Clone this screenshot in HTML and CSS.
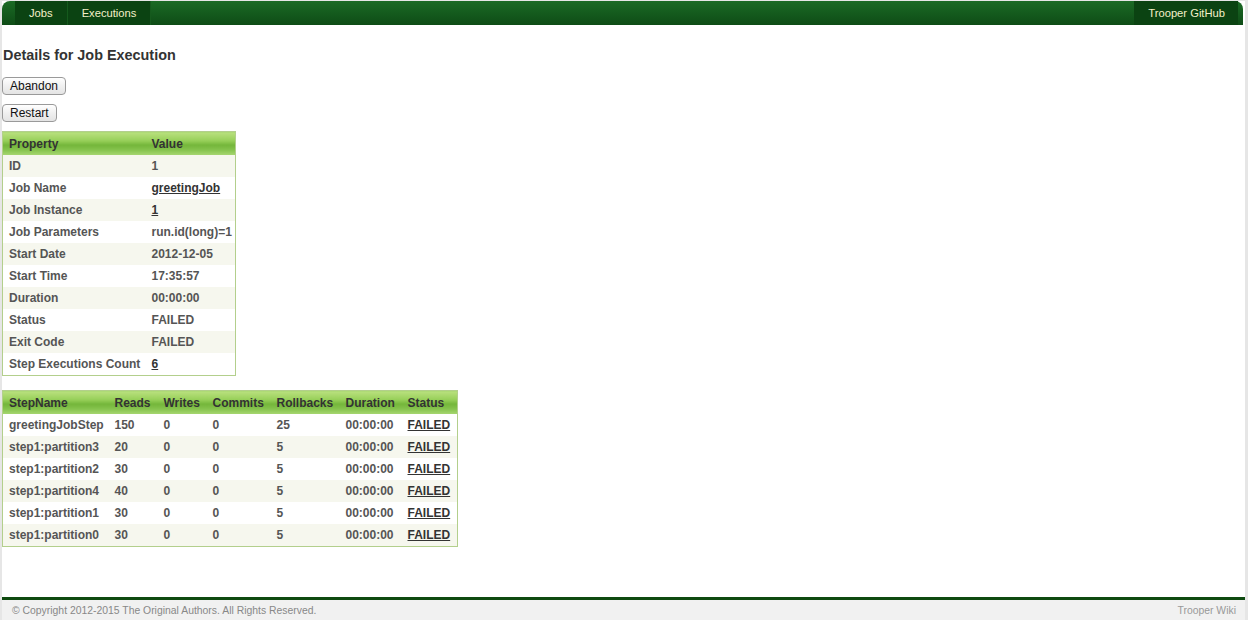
FILE: index.html
```html
<!DOCTYPE html>
<html>
<head>
<meta charset="utf-8">
<link rel="stylesheet" href="styles.css">
</head>
<body>
<div class="page">
  <nav class="navbar">
    <ul class="nav-left">
      <li><a href="#">Jobs</a></li>
      <li><a href="#">Executions</a></li>
    </ul>
    <ul class="nav-right">
      <li><a href="#">Trooper GitHub</a></li>
    </ul>
  </nav>
  <main class="content">
    <h1 class="title">Details for Job Execution</h1>
    <div class="btn-row"><button class="btn btn-abandon">Abandon</button></div>
    <div class="btn-row btn-row-last"><button class="btn">Restart</button></div>
    <table class="grid props">
      <colgroup><col class="w-prop"><col></colgroup>
      <thead><tr><th>Property</th><th>Value</th></tr></thead>
      <tbody>
        <tr><td>ID</td><td>1</td></tr>
        <tr><td>Job Name</td><td><a href="#">greetingJob</a></td></tr>
        <tr><td>Job Instance</td><td><a href="#">1</a></td></tr>
        <tr><td>Job Parameters</td><td>run.id(long)=1</td></tr>
        <tr><td>Start Date</td><td>2012-12-05</td></tr>
        <tr><td>Start Time</td><td>17:35:57</td></tr>
        <tr><td>Duration</td><td>00:00:00</td></tr>
        <tr><td>Status</td><td>FAILED</td></tr>
        <tr><td>Exit Code</td><td>FAILED</td></tr>
        <tr><td>Step Executions Count</td><td><a href="#">6</a></td></tr>
      </tbody>
    </table>
    <table class="grid steps">
      <colgroup>
        <col class="w-name"><col class="w-reads"><col class="w-writes"><col class="w-commits"><col class="w-rollbacks"><col class="w-duration"><col>
      </colgroup>
      <thead><tr><th>StepName</th><th>Reads</th><th>Writes</th><th>Commits</th><th>Rollbacks</th><th>Duration</th><th>Status</th></tr></thead>
      <tbody>
        <tr><td>greetingJobStep</td><td>150</td><td>0</td><td>0</td><td>25</td><td>00:00:00</td><td><a href="#">FAILED</a></td></tr>
        <tr><td>step1:partition3</td><td>20</td><td>0</td><td>0</td><td>5</td><td>00:00:00</td><td><a href="#">FAILED</a></td></tr>
        <tr><td>step1:partition2</td><td>30</td><td>0</td><td>0</td><td>5</td><td>00:00:00</td><td><a href="#">FAILED</a></td></tr>
        <tr><td>step1:partition4</td><td>40</td><td>0</td><td>0</td><td>5</td><td>00:00:00</td><td><a href="#">FAILED</a></td></tr>
        <tr><td>step1:partition1</td><td>30</td><td>0</td><td>0</td><td>5</td><td>00:00:00</td><td><a href="#">FAILED</a></td></tr>
        <tr><td>step1:partition0</td><td>30</td><td>0</td><td>0</td><td>5</td><td>00:00:00</td><td><a href="#">FAILED</a></td></tr>
      </tbody>
    </table>
  </main>
  <footer class="footer">
    <span>© Copyright 2012-2015 The Original Authors. All Rights Reserved.</span>
    <a href="#">Trooper Wiki</a>
  </footer>
</div>
</body>
</html>
```

FILE: styles.css
```css
html, body {
  margin: 0;
  padding: 0;
  height: 100%;
}
body {
  background: #e6e6e6;
  font-family: "Liberation Sans", Arial, sans-serif;
  color: #333;
}
.page {
  margin: 1px 3px 0 2px;
  height: 619px;
  background: #fff;
  display: flex;
  flex-direction: column;
}
.navbar {
  height: 24px;
  margin-right: 2px;
  border-radius: 8px 8px 0 0;
  background: linear-gradient(#1b6a25, #0e4c16);
  display: flex;
  justify-content: space-between;
}
.navbar ul {
  list-style: none;
  margin: 0;
  padding: 0;
  display: flex;
}
.nav-left { padding-left: 13px !important; }
.nav-right { padding-right: 5px !important; }
.navbar li { display: flex; }
.navbar a {
  display: flex;
  align-items: center;
  padding: 0 14px;
  background: #0b4312;
  border-right: 1px solid #155a1d;
  color: #f3f0c8;
  font-size: 11.2px;
  text-decoration: none;
}
.nav-right a { padding: 0 13px 0 14px; border-right: none; }
.content {
  flex: 1;
}
.title {
  font-size: 14.4px;
  font-weight: bold;
  color: #333;
  margin: 22px 0 12px 1px;
  line-height: 17px;
}
.btn-row { margin-bottom: 9px; height: 18px; }
.btn-row-last { margin-bottom: 10px; }
.btn {
  font-family: "Liberation Sans", Arial, sans-serif;
  font-size: 12px;
  color: #111;
  height: 18px;
  padding: 0 7px;
  border: 1px solid #9a9a9a;
  border-radius: 4px;
  background: linear-gradient(#ffffff, #f0f0f0 50%, #e4e4e4);
  line-height: 16px;
}
.btn-abandon { width: 64px; }
.grid {
  border-collapse: collapse;
  table-layout: fixed;
  border: 1px solid #b3cf8c;
  font-size: 12px;
  font-weight: bold;
  color: #555;
}
.grid th {
  text-align: left;
  height: 23px;
  padding: 0 0 0 6px;
  color: #333;
  background: linear-gradient(#b9e07e 0%, #98d05a 35%, #74b63a 55%, #84c24c 75%, #a9d873 100%);
}
.grid td {
  height: 22px;
  padding: 0 0 0 6px;
  white-space: nowrap;
  overflow: hidden;
}
.grid a { color: #333; text-decoration: underline; }
.props { width: 234px; margin-bottom: 14px; }
.props .w-prop { width: 143px; }
.props tbody tr:nth-child(odd) { background: #f6f7ee; }
.steps { width: 456px; }
.w-name { width: 106px; }
.w-reads { width: 49px; }
.w-writes { width: 49px; }
.w-commits { width: 64px; }
.w-rollbacks { width: 69px; }
.w-duration { width: 62px; }
.steps tbody tr:nth-child(even) { background: #f6f7ee; }
.footer {
  border-top: 3px solid #0e4a10;
  background: #f1f1f1;
  height: 20px;
  display: flex;
  justify-content: space-between;
  align-items: center;
  padding: 0 9px 0 10px;
  font-size: 10.4px;
  color: #888;
}
.footer a { color: #999; text-decoration: none; }
```
